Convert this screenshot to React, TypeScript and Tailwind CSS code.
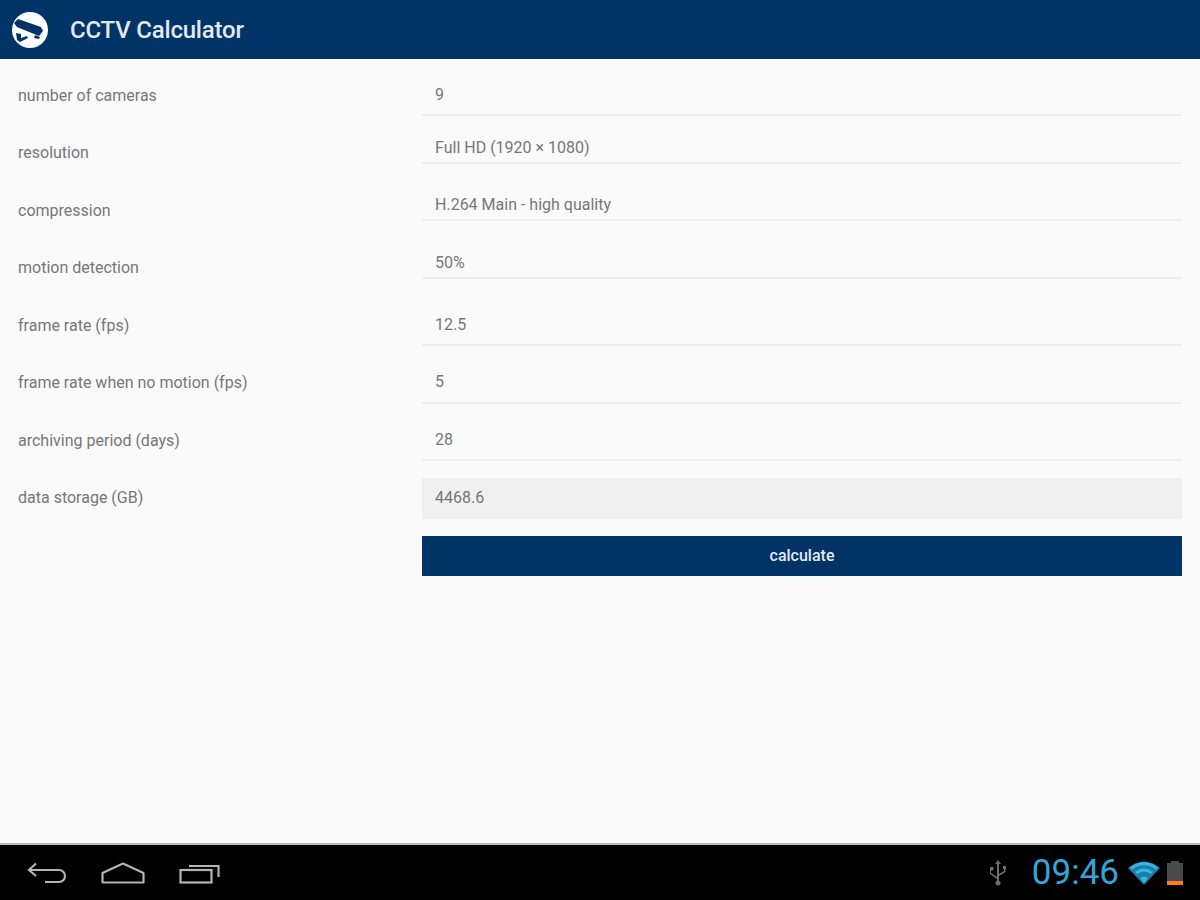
const font = { fontFamily: 'Roboto, sans-serif' };

const rows = [
  { label: 'number of cameras', value: '9', kind: 'input' },
  { label: 'resolution', value: 'Full HD (1920 × 1080)', kind: 'select' },
  { label: 'compression', value: 'H.264 Main - high quality', kind: 'select' },
  { label: 'motion detection', value: '50%', kind: 'select' },
  { label: 'frame rate (fps)', value: '12.5', kind: 'input' },
  { label: 'frame rate when no motion (fps)', value: '5', kind: 'input' },
  { label: 'archiving period (days)', value: '28', kind: 'input' },
  { label: 'data storage (GB)', value: '4468.6', kind: 'result' },
];

const Logo = () => (
  <svg width="38" height="38" viewBox="0 0 38 38">
    <circle cx="19" cy="19" r="18" fill="#fff" />
    <path d="M3 12 L7 8 L30 16 L32 20 L28 25 L6 16 Z" fill="#003366" />
    <path d="M24 24 L29 26 L28 28 L23 27 Z" fill="#003366" />
    <path d="M5 22 L10 23 L10 27 L16 25 L17 27 L9 31 L6 29 Z" fill="#003366" />
  </svg>
);

const BackIcon = () => (
  <svg width="40" height="22" viewBox="0 0 40 22" fill="none" stroke="#b4b4b4" strokeWidth="2.2">
    <path d="M9 1.5 L2 8 L9 14" />
    <path d="M2 8 H32 A6 6 0 0 1 32 20 H18" />
  </svg>
);

const HomeIcon = () => (
  <svg width="44" height="22" viewBox="0 0 44 22" fill="none" stroke="#b4b4b4" strokeWidth="2.2">
    <path d="M1.5 20.5 V11 L22 1.5 L42.5 11 V20.5 Z" strokeLinejoin="round" />
  </svg>
);

const RecentIcon = () => (
  <svg width="42" height="22" viewBox="0 0 42 22" fill="none" stroke="#b4b4b4" strokeWidth="2.2">
    <rect x="1.5" y="8" width="31" height="12.5" />
    <path d="M10 4 H39.5 V15" />
  </svg>
);

const UsbIcon = () => (
  <svg width="18" height="26" viewBox="0 0 18 26" fill="#6e6e6e">
    <rect x="8" y="3" width="2" height="21" />
    <path d="M9 0 L12 4 H6 Z" />
    <circle cx="9" cy="23" r="2.5" />
    <rect x="1" y="7" width="3.5" height="3.5" />
    <rect x="14" y="6" width="3" height="3" />
    <path d="M2 10 V13 L8 17 V19 L1 14 V10 Z" />
    <path d="M15 9 H16.5 V12 L10 16 V14 L15 11 Z" />
  </svg>
);

const WifiIcon = () => (
  <svg width="32" height="24" viewBox="0 0 32 24">
    <path d="M0 7 Q16 -6 32 7 L16 24 Z" fill="#1f7ea3" />
    <path d="M3 7.5 Q16 -2 29 7.5" fill="none" stroke="#33b5e5" strokeWidth="3" />
    <path d="M8 12 Q16 6 24 12" fill="none" stroke="#33b5e5" strokeWidth="3" />
    <path d="M12 17 Q16 14 20 17 L16 22 Z" fill="#33b5e5" />
  </svg>
);

const BatteryIcon = () => (
  <div className="flex w-[16px] flex-col items-center">
    <div className="h-[2px] w-[8px] bg-[#4a4a4a]" />
    <div className="h-[18px] w-[16px] bg-[#4a4a4a]" />
    <div className="h-[4px] w-[16px] bg-[#ff7a1a]" />
  </div>
);

function Field({ kind, value }: { kind: string; value: string }) {
  if (kind === 'select') {
    return (
      <div className="mt-[9px] flex h-[30px] w-[760px] items-center self-start border-b-2 border-[#efefef] pl-[13px]">
        {value}
      </div>
    );
  }
  if (kind === 'result') {
    return <div className="flex h-[41px] w-[760px] items-center bg-[#f0f0f0] pl-[13px]">{value}</div>;
  }
  return (
    <div className="flex h-[41px] w-[760px] items-center border-b-2 border-[#efefef] pl-[13px]">{value}</div>
  );
}

export default function App() {
  return (
    <div className="flex h-[900px] w-[1200px] flex-col overflow-hidden bg-[#fafafa]" style={font}>
      <header className="flex h-[59px] shrink-0 items-center bg-[#003366] pl-[11px] text-white">
        <Logo />
        <h1 className="ml-[21px] text-[24px] font-medium tracking-[-0.2px] text-[#e4e8ef]">CCTV Calculator</h1>
      </header>

      <main className="flex-1 pt-[8px] text-[16px] text-[#777777]">
        {rows.map((row) => (
          <div key={row.label} className="flex h-[57.5px] items-center pl-[18px]">
            <div className="w-[404px] shrink-0">{row.label}</div>
            <Field kind={row.kind} value={row.value} />
          </div>
        ))}
        <button className="ml-[422px] mt-[9px] flex h-[40px] w-[760px] items-center justify-center bg-[#003366] text-[16px] font-medium text-[#e4e8ef]">
          calculate
        </button>
      </main>

      <footer className="flex h-[57px] shrink-0 items-center justify-between border-t-2 border-[#b8b8b8] bg-black pl-[27px] pr-[17px]">
        <div className="flex items-center gap-[34px]">
          <BackIcon />
          <HomeIcon />
          <RecentIcon />
        </div>
        <div className="flex items-center">
          <UsbIcon />
          <span className="ml-[25px] text-[35px] leading-none text-[#33a5d8]">09:46</span>
          <div className="ml-[9px]"><WifiIcon /></div>
          <div className="ml-[7px]"><BatteryIcon /></div>
        </div>
      </footer>
    </div>
  );
}
